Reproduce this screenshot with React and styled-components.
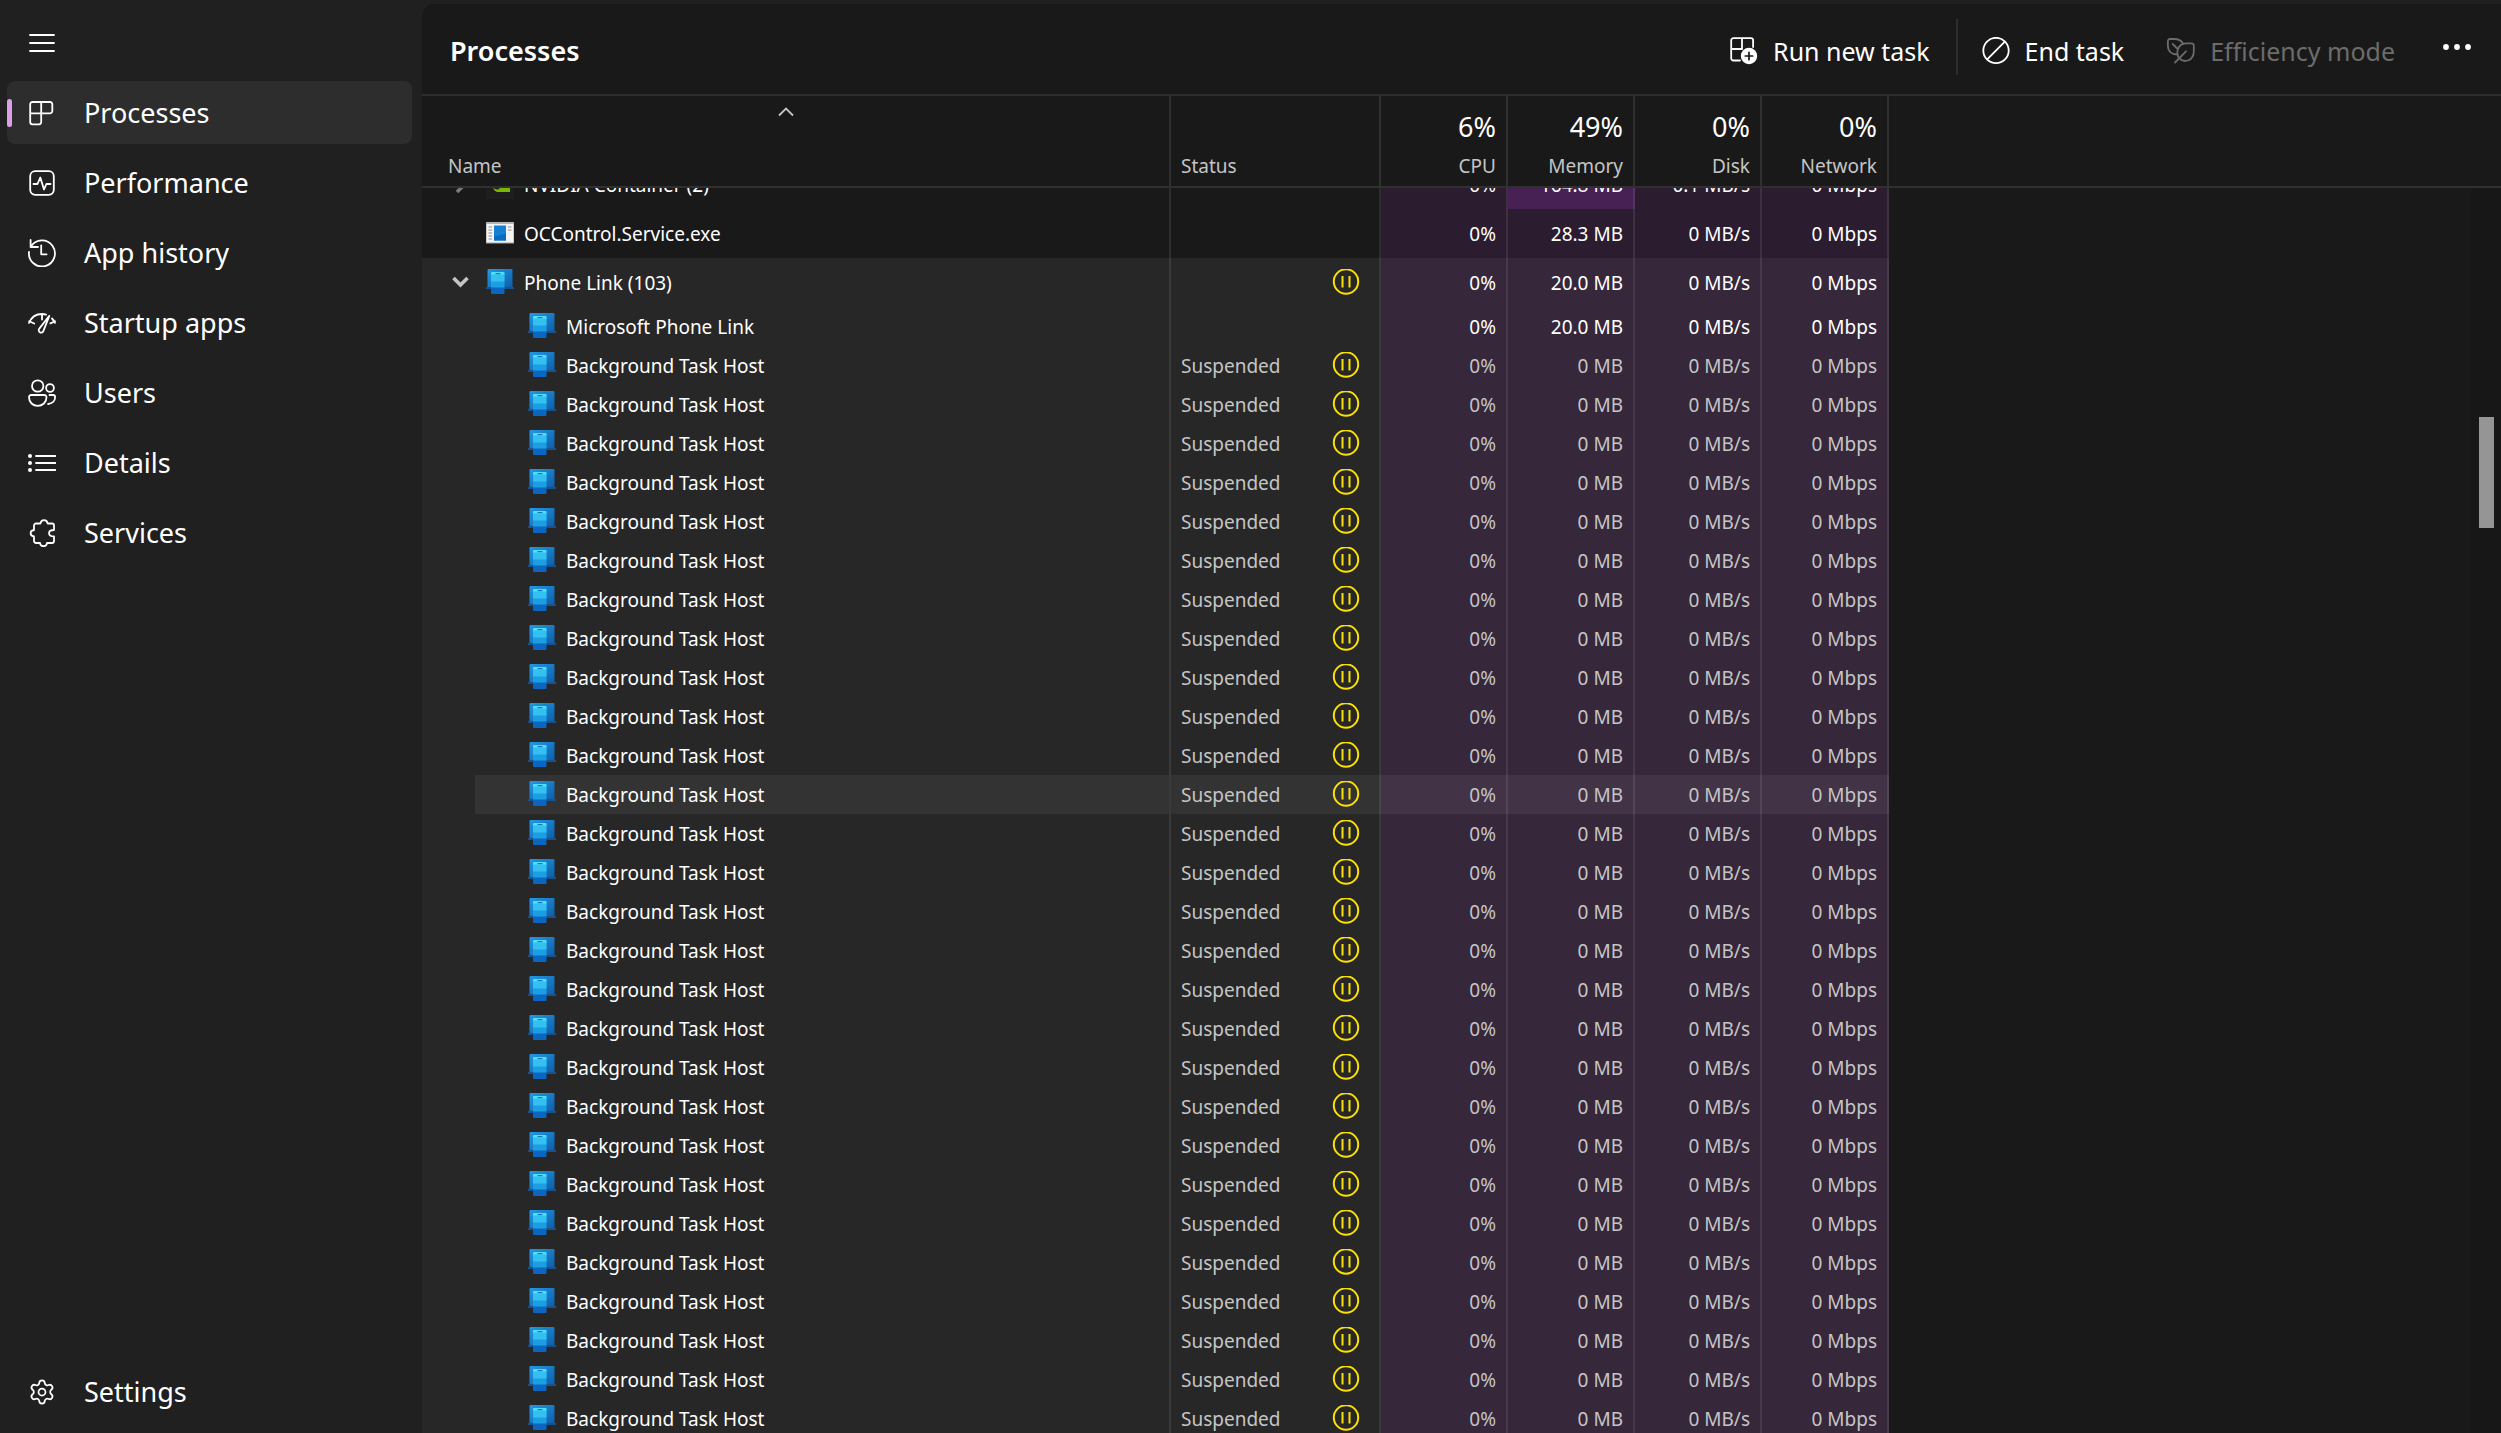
import React, { useLayoutEffect, useRef } from "react";
import styled, { createGlobalStyle } from "styled-components";
import { Settings } from "lucide-react";

const GlobalStyle = createGlobalStyle`
  * {
    box-sizing: border-box;
  }
  body {
    margin: 0;
    background: #202020;
    color: #ffffff;
    font-family: "Noto Sans", "Open Sans", sans-serif;
    overflow: hidden;
  }
  button {
    border: 0;
    padding: 0;
    background: none;
    color: inherit;
    font: inherit;
  }
`;

const Window = styled.div`
  display: flex;
  height: 100vh;
  background: #202020;
`;

const Sidebar = styled.nav`
  width: 422px;
  flex: none;
  display: flex;
  flex-direction: column;
  gap: 7px;
  padding: 11px 10px 10px 7px;
`;

const NavItem = styled.a`
  position: relative;
  display: flex;
  align-items: center;
  gap: 28px;
  height: 63px;
  padding-left: 21px;
  border-radius: 8px;
  background: ${(props) => props.$active && "#2d2d2d"};
  color: #ffffff;
  font-size: 27px;
  line-height: 36px;
  text-decoration: none;
  &:hover {
    background: #2d2d2d;
  }
`;

const ActiveMark = styled.span`
  position: absolute;
  left: 0;
  top: 18px;
  width: 5px;
  height: 28px;
  border-radius: 3px;
  background: #dc9ee6;
`;

const MenuButton = styled.button`
  display: flex;
  align-items: center;
  height: 63px;
  padding-left: 21px;
`;

const Spacer = styled.div`
  flex: 1;
`;

const Main = styled.main`
  flex: 1;
  min-width: 0;
  display: flex;
  flex-direction: column;
  margin-top: 4px;
  border-top-left-radius: 12px;
  background: #191919;
  overflow: hidden;
`;

const Toolbar = styled.header`
  display: flex;
  align-items: center;
  height: 92px;
  flex: none;
  padding: 0 30px 0 28px;
  border-bottom: 2px solid #2d2d2d;
`;

const Title = styled.h1`
  flex: 1;
  margin: 0;
  padding-top: 4px;
  font-size: 27px;
  line-height: 36px;
  font-weight: 600;
`;

const ToolButton = styled.button`
  display: flex;
  align-items: center;
  gap: 15px;
  height: 56px;
  padding-top: 4px;
  margin-left: ${(props) => props.$space}px;
  font-size: 25px;
  line-height: 36px;
  white-space: nowrap;
  &:disabled {
    color: #6c6c6c;
  }
`;

const Divider = styled.span`
  width: 2px;
  height: 56px;
  margin: 0 0 4px 26px;
  background: #2d2d2d;
`;

const Content = styled.div`
  flex: 1;
  min-height: 0;
  display: flex;
`;

const Scroller = styled.div`
  flex: 1;
  min-width: 0;
  overflow: hidden;
`;

const ScrollTrack = styled.div`
  width: 30px;
  flex: none;
  background: #171717;
`;

const TrackHead = styled.div`
  height: 92px;
  background: #191919;
  border-bottom: 2px solid #303030;
`;

const ScrollThumb = styled.div`
  height: 111px;
  margin: 229px 7px 0 8px;
  background: #959595;
`;

const Table = styled.table`
  table-layout: fixed;
  width: 100%;
  border-spacing: 0;
  font-size: 19px;
  line-height: 26px;
`;

const Col = styled.col`
  width: ${(props) => props.$w}px;
`;

const HeadCell = styled.th`
  position: sticky;
  top: 0;
  z-index: 1;
  height: 92px;
  padding: 0;
  background: #191919;
  border-right: 2px solid #303030;
  border-bottom: 2px solid #303030;
  font-weight: 400;
`;

const HeadFiller = styled(HeadCell)`
  border-right: 0;
`;

const HeadButton = styled.button`
  display: flex;
  flex-direction: column;
  justify-content: flex-end;
  align-items: ${(props) => (props.$left ? "flex-start" : "flex-end")};
  width: 100%;
  height: 90px;
  padding: 0 10px 7px ${(props) => (props.$name ? "26px" : "10px")};
  color: #c5c5c5;
`;

const SortArrow = styled.svg`
  align-self: center;
  margin: 0 36px 36px 0;
`;

const Total = styled.span`
  margin-bottom: 8px;
  color: #ffffff;
  font-size: 27px;
  line-height: 36px;
`;

const Row = styled.tr`
  background: ${(props) => (props.$group ? "#272727" : "#191919")};
`;

const Cell = styled.td`
  height: ${(props) => (props.$child ? 39 : 49)}px;
  padding: 0;
  border-right: 2px solid rgba(255, 255, 255, 0.09);
  background: ${(props) => props.$hot && "#333333"};
`;

const FillerCell = styled.td`
  padding: 0;
  background: #191919;
`;

const NameCell = styled(Cell)`
  padding-left: ${(props) => (props.$child ? 53 : 26)}px;
  background: none;
`;

const NameBox = styled.div`
  display: flex;
  align-items: center;
  height: ${(props) => (props.$child ? 39 : 49)}px;
  padding-left: ${(props) => (props.$child ? 53 : 0)}px;
  background: ${(props) => props.$hot && "#333333"};
`;

const Expander = styled.button`
  display: flex;
  align-items: center;
  width: 38px;
  height: 28px;
  padding-left: 4px;
`;

const NameIcon = styled.span`
  display: flex;
  width: 28px;
  margin-right: 10px;
`;

const StatusBox = styled.div`
  display: flex;
  align-items: center;
  justify-content: space-between;
  padding: 0 19px 0 10px;
  color: #c5c5c5;
`;

const heat = (props) => {
  if (props.$high) return "#472153";
  if (props.$hot) return "#423347";
  return props.$group ? "#36273b" : "#2c1c30";
};

const ValueCell = styled(Cell)`
  padding-right: 10px;
  text-align: right;
  white-space: nowrap;
  background: ${heat};
  color: ${(props) => (props.$dim ? "#c5c5c5" : "#ffffff")};
`;

const Line = ({ children, size = 28, ...rest }) => (
  <svg
    width={size}
    height={size}
    viewBox="0 0 28 28"
    fill="none"
    stroke="currentColor"
    strokeWidth="1.8"
    strokeLinecap="round"
    strokeLinejoin="round"
    aria-hidden="true"
    {...rest}
  >
    {children}
  </svg>
);

const MenuIcon = () => (
  <Line>
    <path d="M2 6h24M2 14h24M2 22h24" />
  </Line>
);

const ProcessesIcon = () => (
  <Line>
    <path d="M4.500 3H22a2.300 2.300 0 0 1 2.300 2.300V12a2.300 2.300 0 0 1-2.300 2.300H13.200V23A2.300 2.300 0 0 1 11 25.300H4.500A2.300 2.300 0 0 1 2.200 23V5.300A2.300 2.300 0 0 1 4.500 3zM13.200 3v11.300M2.200 14.300h11" />
  </Line>
);

const PerformanceIcon = () => (
  <Line>
    <rect x="2.200" y="2.200" width="23.600" height="23.600" rx="5" />
    <path d="M5.500 15H9.500L12.300 8.500L16 20.500L18.400 15H22.500" />
  </Line>
);

const HistoryIcon = () => (
  <Line>
    <path d="M1 13A13 13 0 1 0 3 7.400M2.600 1V8H10M13.200 6.500V15.300H18.600" />
  </Line>
);

const StartupIcon = () => (
  <Line>
    <path d="M1 13.800C3.500 8 8.500 5 14 5c1.500 0 2.800.2 4 .6M1.200 12.200l5 2.300M14 5v5.500M24 9.500c1.200 1.200 2.200 2.600 3 4.300M27 12.200l-4.600 2.200" />
    <path d="M21.300 6.800L11.300 19.600c-2 3 2 5.600 4 2.600z" />
  </Line>
);

const UsersIcon = () => (
  <Line>
    <circle cx="9.700" cy="7" r="5.700" />
    <circle cx="22" cy="9" r="3.900" />
    <path d="M3.200 16H16.300a2.200 2.200 0 0 1 2.200 2.200C18.500 23.500 14.500 26.800 9.700 26.800S1 23.500 1 18.200A2.200 2.200 0 0 1 3.200 16zM21.500 16H25a2.100 2.100 0 0 1 2.100 2.100c0 4-3 6.700-7 6.900" />
  </Line>
);

const DetailsIcon = () => (
  <Line>
    <path d="M8 7h19.500M8 14h19.500M8 21h19.500" />
    <g fill="currentColor" stroke="none">
      <circle cx="2" cy="7" r="2" />
      <circle cx="2" cy="14" r="2" />
      <circle cx="2" cy="21" r="2" />
    </g>
  </Line>
);

const ServicesIcon = () => (
  <Line>
    <path d="M8 4.500h4.500c.5-4.600 6.600-4.600 7.100 0H24a2 2 0 0 1 2 2V11c-6.600 0-6.600 6.400 0 6.400V22a2 2 0 0 1-2 2h-5c-.5 4.300-6.500 4.300-7 0H8a2 2 0 0 1-2-2v-4.600c-4.500-.5-4.500-6 0-6.400V6.500a2 2 0 0 1 2-2z" />
  </Line>
);

const RunIcon = () => (
  <Line>
    <path d="M10 23.500H3.500A2.300 2.300 0 0 1 1.200 21.200V3.500A2.300 2.300 0 0 1 3.500 1.200H20.800A2.300 2.300 0 0 1 23.100 3.500V10M12 1.200V12H1.200" />
    <circle cx="19" cy="19" r="8.200" fill="currentColor" stroke="none" />
    <path d="M19 15.300v7.400M15.300 19h7.400" stroke="#191919" strokeWidth="1.700" />
  </Line>
);

const EndIcon = () => (
  <Line>
    <circle cx="14" cy="13.500" r="12.700" />
    <path d="M5.200 22.300L22.800 4.700" />
  </Line>
);

const LeafIcon = () => (
  <Line>
    <path d="M10.500 17.500C4.500 17.500.9 14 .9 8.500V4A2 2 0 0 1 2.900 2H7c4.500 0 7.500 1.800 9 4.500" />
    <path d="M12.300 21.300C9 17.500 9.500 6.500 19 6.300h5.600a2.200 2.200 0 0 1 2.200 2.200V14c0 10-9.500 12.300-14.500 7.300zM8 25.500L19 14.300M5.700 7l4.500 4.500" />
  </Line>
);

const MoreIcon = () => (
  <Line fill="currentColor" stroke="none">
    <circle cx="3" cy="10" r="2.900" />
    <circle cx="14" cy="10" r="2.900" />
    <circle cx="25" cy="10" r="2.900" />
  </Line>
);

const PauseIcon = () => (
  <svg width="28" height="28" viewBox="0 0 28 28" fill="none" stroke="#fce100" role="img" aria-label="Paused">
    <circle cx="14" cy="12.500" r="12.200" strokeWidth="2" />
    <path d="M10.500 7v11.500M17.500 7v11.500" strokeWidth="2" />
  </svg>
);

const PhoneLinkIcon = () => (
  <svg width="28" height="28" viewBox="0 0 28 28" aria-hidden="true">
    <defs>
      <linearGradient id="screen" x1="0" y1="0" x2="1" y2="1">
        <stop offset="0" stopColor="#2299e6" />
        <stop offset="1" stopColor="#0e5ca6" />
      </linearGradient>
    </defs>
    <rect x="1.500" y="0" width="25" height="19" rx="1" fill="url(#screen)" />
    <rect x="0" y="18" width="28" height="2" fill="#15528f" />
    <rect x="5" y="3" width="13.500" height="22" rx="1" fill="#0a66c0" />
    <path d="M5 4a1 1 0 0 1 1-1h11.500a1 1 0 0 1 1 1v14.500H5z" fill="#1c9ee2" />
    <path d="M5 5h13.500v7.500H5z" fill="#34c0f0" />
    <path d="M5 4a1 1 0 0 1 1-1h11.500a1 1 0 0 1 1 1v1.500H5z" fill="#50e0fb" />
    <rect x="9.500" y="4" width="5" height="1.200" fill="#1580b8" />
  </svg>
);

const ServiceExeIcon = () => (
  <svg width="28" height="23" viewBox="0 0 28 23" aria-hidden="true">
    <rect x="0" y="0" width="28" height="21" fill="#f4f4f4" stroke="#a5a5a5" />
    <rect x="0" y="0" width="28" height="2" fill="#b4b4b4" />
    <rect x="8" y="3.500" width="12" height="15" fill="#1581d3" />
    <path d="M8 18.500v-4l12-3v7z" fill="#0a6cc0" />
    <path d="M2.500 5h3.500M2.500 8h3.500M2.500 11h3.500M2.500 14h3.500M2.500 17h3.500M22 5h3.500M22 8h3.500" stroke="#8c8c8c" />
  </svg>
);

const NvidiaIcon = () => (
  <svg width="28" height="28" viewBox="0 0 28 28" aria-hidden="true">
    <rect width="28" height="28" fill="#1e1e1e" />
    <path d="M10 6h14v15H11c-2-1-3-2-4-4 2 1 4 2 7 1l-4-3z" fill="#76b900" />
  </svg>
);

const Chevron = ({ open }) => (
  <svg width="18" height="18" viewBox="0 0 18 18" fill="none" stroke={open ? "#c5c5c5" : "#7a7a7a"} strokeWidth="3.600" aria-hidden="true">
    <path d={open ? "M1.500 4L8.500 11L15.500 4" : "M5 2L12 9L5 16"} />
  </svg>
);

const navItems = [
  { label: "Processes", Icon: ProcessesIcon },
  { label: "Performance", Icon: PerformanceIcon },
  { label: "App history", Icon: HistoryIcon },
  { label: "Startup apps", Icon: StartupIcon },
  { label: "Users", Icon: UsersIcon },
  { label: "Details", Icon: DetailsIcon },
  { label: "Services", Icon: ServicesIcon },
];

const totals = [
  { label: "CPU", value: "6%" },
  { label: "Memory", value: "49%" },
  { label: "Disk", value: "0%" },
  { label: "Network", value: "0%" },
];

const taskHosts = Array.from({ length: 28 }, (_, i) => ({
  name: "Background Task Host",
  Icon: PhoneLinkIcon,
  child: true,
  group: true,
  suspended: true,
  paused: true,
  hot: i === 11,
  values: ["0%", "0 MB", "0 MB/s", "0 Mbps"],
}));

const processes = [
  {
    name: "NVIDIA Container (2)",
    Icon: NvidiaIcon,
    expandable: true,
    high: 1,
    values: ["0%", "164.8 MB", "0.1 MB/s", "0 Mbps"],
  },
  {
    name: "OCControl.Service.exe",
    Icon: ServiceExeIcon,
    values: ["0%", "28.3 MB", "0 MB/s", "0 Mbps"],
  },
  {
    name: "Phone Link (103)",
    Icon: PhoneLinkIcon,
    expandable: true,
    open: true,
    group: true,
    paused: true,
    values: ["0%", "20.0 MB", "0 MB/s", "0 Mbps"],
  },
  {
    name: "Microsoft Phone Link",
    Icon: PhoneLinkIcon,
    child: true,
    group: true,
    values: ["0%", "20.0 MB", "0 MB/s", "0 Mbps"],
  },
  ...taskHosts,
];

const ProcessRow = ({ item }) => {
  const { name, Icon, child, group, hot, open, expandable } = item;
  return (
    <Row $group={group}>
      <NameCell $child={child}>
        <NameBox $child={child} $hot={hot}>
          {!child && (
            <Expander aria-label={name} disabled={!expandable}>
              {expandable && <Chevron open={open} />}
            </Expander>
          )}
          <NameIcon>
            <Icon />
          </NameIcon>
          {name}
        </NameBox>
      </NameCell>
      <Cell $child={child} $hot={hot}>
        <StatusBox>
          <span>{item.suspended && "Suspended"}</span>
          {item.paused && <PauseIcon />}
        </StatusBox>
      </Cell>
      {item.values.map((value, i) => (
        <ValueCell
          key={i}
          $child={child}
          $group={group}
          $hot={hot}
          $high={item.high === i}
          $dim={item.suspended}
        >
          {value}
        </ValueCell>
      ))}
      <FillerCell />
    </Row>
  );
};

const App = () => {
  const scroller = useRef(null);

  useLayoutEffect(() => {
    scroller.current.scrollTop = 28;
  }, []);

  return (
    <Window>
      <GlobalStyle />
      <Sidebar>
        <MenuButton aria-label="Open navigation">
          <MenuIcon />
        </MenuButton>
        {navItems.map(({ label, Icon }, i) => (
          <NavItem key={label} href="#" $active={i === 0}>
            {i === 0 && <ActiveMark />}
            <Icon />
            {label}
          </NavItem>
        ))}
        <Spacer />
        <NavItem href="#">
          <Settings size={28} strokeWidth={1.5} />
          Settings
        </NavItem>
      </Sidebar>
      <Main>
        <Toolbar>
          <Title>Processes</Title>
          <ToolButton>
            <RunIcon />
            Run new task
          </ToolButton>
          <Divider />
          <ToolButton $space={24}>
            <EndIcon />
            End task
          </ToolButton>
          <ToolButton $space={43} disabled>
            <LeafIcon />
            Efficiency mode
          </ToolButton>
          <ToolButton $space={48} aria-label="More options">
            <MoreIcon />
          </ToolButton>
        </Toolbar>
        <Content>
          <Scroller ref={scroller}>
            <Table>
              <colgroup>
                <Col $w={749} />
                <Col $w={210} />
                {totals.map(({ label }) => (
                  <Col key={label} $w={127} />
                ))}
                <col />
              </colgroup>
              <thead>
                <tr>
                  <HeadCell>
                    <HeadButton $left $name>
                      <SortArrow width="16" height="10" viewBox="0 0 16 10" fill="none" stroke="#c5c5c5" strokeWidth="1.800">
                        <path d="M1 8.500L8 1.500L15 8.500" />
                      </SortArrow>
                      Name
                    </HeadButton>
                  </HeadCell>
                  <HeadCell>
                    <HeadButton $left>Status</HeadButton>
                  </HeadCell>
                  {totals.map(({ label, value }) => (
                    <HeadCell key={label}>
                      <HeadButton>
                        <Total>{value}</Total>
                        {label}
                      </HeadButton>
                    </HeadCell>
                  ))}
                  <HeadFiller as="td" />
                </tr>
              </thead>
              <tbody>
                {processes.map((item, i) => (
                  <ProcessRow key={i} item={item} />
                ))}
              </tbody>
            </Table>
          </Scroller>
          <ScrollTrack>
            <TrackHead />
            <ScrollThumb />
          </ScrollTrack>
        </Content>
      </Main>
    </Window>
  );
};

export default App;
